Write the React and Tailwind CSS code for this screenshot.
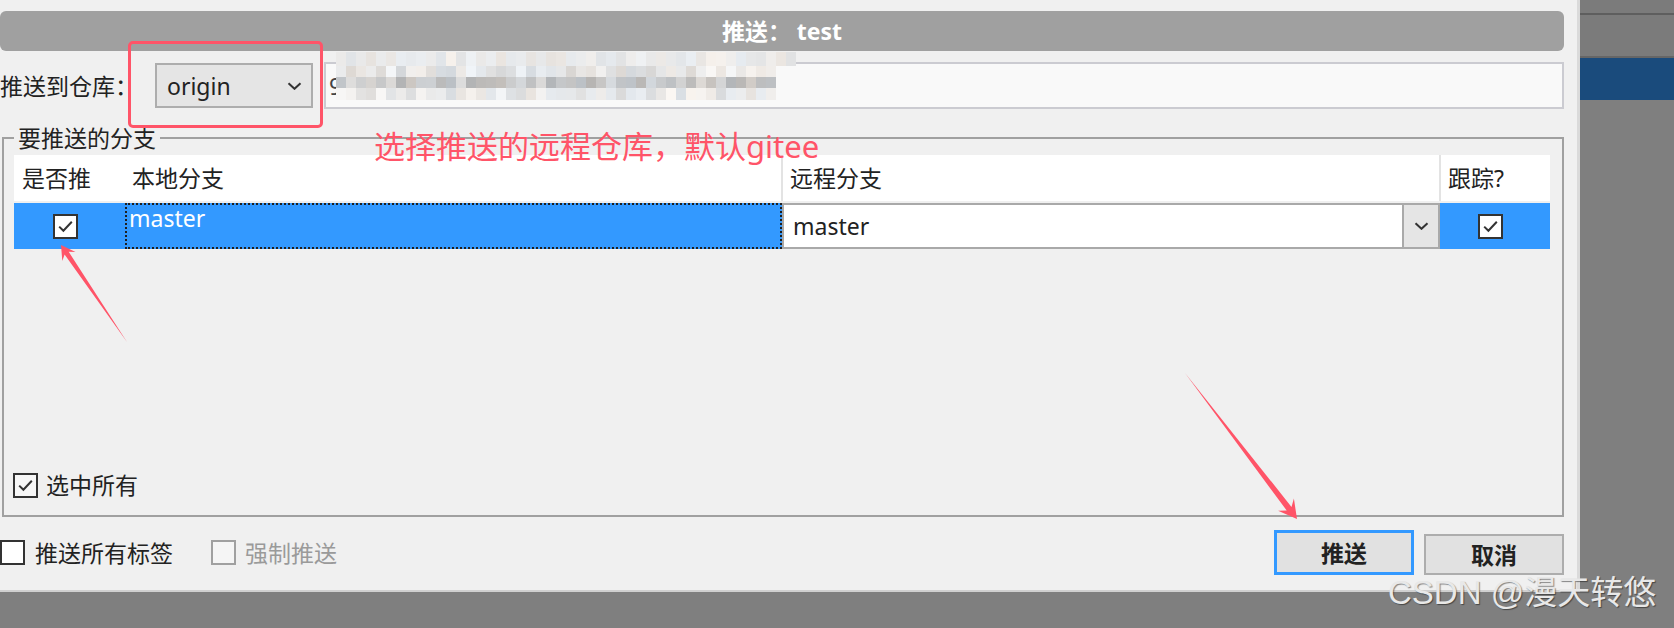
import React from "react";

const F = "font-['Noto_Sans','Noto_Sans_CJK_SC',sans-serif]";

function CheckIcon() {
  return (
    <svg width="19" height="19" viewBox="0 0 19 19">
      <path d="M3.2 9.6 L7.4 13.8 L15.8 4.8" fill="none" stroke="#333" strokeWidth="2" />
    </svg>
  );
}

function Box({ checked = false, variant = "white" }) {
  const cls =
    variant === "disabled"
      ? "w-[25px] h-[25px] shrink-0 border-2 border-[#a0a0a0] bg-[#f5f5f5] flex items-center justify-center"
      : variant === "light"
      ? "w-[25px] h-[25px] shrink-0 border-2 border-[#333] bg-[#f7f7f7] flex items-center justify-center"
      : "w-[25px] h-[25px] shrink-0 border-2 border-[#333] bg-white flex items-center justify-center";
  return <div className={cls}>{checked && <CheckIcon />}</div>;
}

function Chevron() {
  return (
    <svg width="15" height="8" viewBox="0 0 15 8">
      <path d="M1.5 1.2 L7.5 6.8 L13.5 1.2" fill="none" stroke="#333" strokeWidth="2" />
    </svg>
  );
}

function Mosaic() {
  let seed = 7;
  const rnd = () => {
    seed = (seed * 9301 + 49297) % 233280;
    return seed / 233280;
  };
  const rows = [
    { h: 14, n: 46, lo: 226, hi: 242 },
    { h: 11, n: 44, lo: 214, hi: 250 },
    { h: 11, n: 44, lo: 178, hi: 222 },
    { h: 12, n: 44, lo: 218, hi: 248 },
  ];
  return (
    <div className="absolute left-[336px] top-[52px] flex flex-col blur-[0.6px]">
      {rows.map((r, i) => (
        <div key={i} className="flex">
          {Array.from({ length: r.n }).map((_, j) => {
            const v = Math.round(r.lo + (r.hi - r.lo) * rnd());
            const t = Math.round((rnd() - 0.5) * 10);
            const c = `rgb(${v + t},${v},${v - t})`;
            return <div key={j} style={{ width: 10, height: r.h, background: c }} />;
          })}
        </div>
      ))}
    </div>
  );
}

export default function App() {
  return (
    <div className={`relative w-[1674px] h-[628px] overflow-hidden bg-[#7f7f7f] ${F} text-[#222]`}>
      <div className="flex items-start">
        {/* dialog */}
        <div className="w-[1580px] h-[592px] shrink-0 bg-[#f0f0f0] border-r-[3px] border-b-2 border-r-[#dadada] border-b-[#d0d0d0] flex flex-col pt-[11px]">
          <div className="w-[1564px] h-[40px] rounded-[6px] bg-[#a0a0a0] flex items-center justify-center text-white font-bold text-[23px] leading-none">
            推送： test
          </div>

          <div className="mt-[11px] h-[47px] flex items-center">
            <span className="w-[155px] text-[23px] leading-[30px]">推送到仓库：</span>
            <div className="w-[158px] h-[45px] border-2 border-[#adadad] bg-[#e5e5e5] flex items-center justify-between pl-[10px] pr-[9px]">
              <span className="text-[23px] leading-[30px]">origin</span>
              <Chevron />
            </div>
            <div className="ml-[11px] w-[1240px] h-[47px] border-2 border-[#cbcbd1] bg-[#f9f9f9] flex items-center pl-[3px] text-[23px] leading-[30px] text-[#444] overflow-hidden">
              9
            </div>
          </div>

          <div className="relative mt-[28px] ml-[2px] w-[1562px] h-[380px] border-2 border-[#a0a0a0] flex flex-col">
            <span className="absolute left-[10px] -top-[15px] px-[4px] bg-[#f0f0f0] text-[23px] leading-[28px]">
              要推送的分支
            </span>
            <div className="ml-[10px] mt-[16px] w-[1536px] flex flex-col text-[23px]">
              <div className="h-[46px] bg-white flex leading-[30px]">
                <div className="w-[111px] flex items-center pl-[8px]">是否推</div>
                <div className="w-[656px] flex items-center pl-[7px]">本地分支</div>
                <div className="w-[2px] bg-[#e3e3e3]" />
                <div className="w-[656px] flex items-center pl-[7px]">远程分支</div>
                <div className="w-[2px] bg-[#e3e3e3]" />
                <div className="flex-1 flex items-center pl-[7px]">跟踪?</div>
              </div>
              <div className="mt-[2px] h-[46px] flex">
                <div className="w-[111px] bg-[#3399ff] flex items-center pl-[39px]">
                  <Box checked />
                </div>
                <div className="w-[657px] bg-[#3399ff] border-2 border-dotted border-[#1f1f1f] text-white pl-[2px] leading-[26px]">
                  master
                </div>
                <div className="w-[658px] bg-white border-2 border-[#a9a9a9] flex">
                  <div className="flex-1 flex items-center pl-[9px] leading-[30px]">master</div>
                  <div className="w-[36px] border-l-2 border-[#a9a9a9] bg-[#e5e5e5] flex items-center justify-center">
                    <Chevron />
                  </div>
                </div>
                <div className="flex-1 bg-[#3399ff] flex items-center pl-[38px]">
                  <Box checked />
                </div>
              </div>
            </div>
            <div className="mt-auto mb-[15px] ml-[9px] flex items-center gap-[8px]">
              <Box checked variant="light" />
              <span className="text-[23px] leading-[30px]">选中所有</span>
            </div>
          </div>

          <div className="mt-[13px] h-[45px] flex items-center text-[23px] leading-[30px]">
            <Box />
            <span className="ml-[10px] w-[176px]">推送所有标签</span>
            <Box variant="disabled" />
            <span className="ml-[9px] text-[#9a9a9a]">强制推送</span>
            <div className="ml-auto mr-[13px] self-stretch flex items-end gap-[10px]">
              <div className="w-[140px] h-[45px] border-[3px] border-[#3399ff] bg-[#e1e1e1] flex items-center justify-center font-bold">
                推送
              </div>
              <div className="w-[140px] h-[41px] border-2 border-[#adadad] bg-[#e1e1e1] flex items-center justify-center font-bold">
                取消
              </div>
            </div>
          </div>
        </div>

        {/* right background window */}
        <div className="flex-1 flex flex-col">
          <div className="h-[13px] bg-[#7b7b7b]" />
          <div className="h-[2px] bg-[#5e5e5e]" />
          <div className="h-[41px] bg-[#7b7b7b]" />
          <div className="h-[2px] bg-[#666666]" />
          <div className="h-[42px] bg-[#1a4b7c]" />
        </div>
      </div>

      {/* blurred url */}
      <Mosaic />

      {/* annotations */}
      <div className="absolute left-[128px] top-[41px] w-[195px] h-[87px] border-[3px] border-[#ff5468] rounded-[5px]" />
      <div className="absolute left-[374px] top-[130px] text-[31px] leading-[32px] text-[#ff5468] whitespace-nowrap">
        选择推送的远程仓库，默认gitee
      </div>
      <svg className="absolute left-0 top-0 pointer-events-none" width="1674" height="628" viewBox="0 0 1674 628">
        <polygon
          points="127,342 68.7,251.8 75.5,252 61,245 62.3,261 64.6,254.6"
          fill="#ff5468"
        />
        <polygon
          points="1185,373 1291.5,506.9 1293.9,498.6 1297,519 1278.1,510.8 1286.7,510.5"
          fill="#ff5468"
        />
      </svg>

      <div className="absolute left-[1388px] top-[576px] text-[33px] leading-[34px] text-[#e8e8e8] whitespace-nowrap font-['Liberation_Sans','Noto_Sans_CJK_SC',sans-serif] [text-shadow:1px_1px_1px_rgba(0,0,0,0.45)]">
        CSDN @漫天转悠
      </div>
    </div>
  );
}
